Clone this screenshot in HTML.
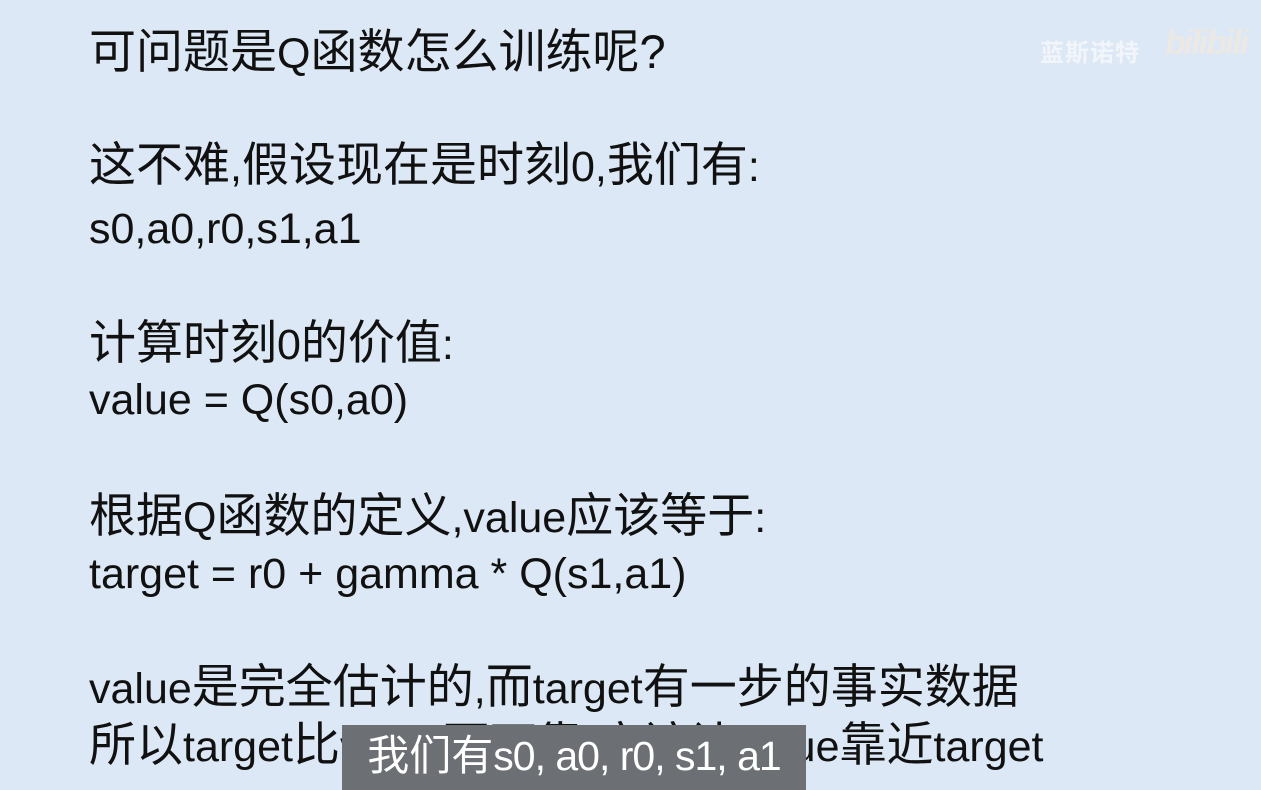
<!DOCTYPE html>
<html><head><meta charset="utf-8"><style>
body{margin:0;width:1261px;height:790px;overflow:hidden;background:#dce8f5;position:relative;font-family:"Liberation Sans","Noto Sans CJK SC",sans-serif;color:#111}
.l{position:absolute;left:89px;font-size:47px;line-height:58px;white-space:nowrap}
.l b{font-weight:normal;font-size:43px}
.wm{position:absolute;left:1040px;top:33px;font-size:24px;color:#f2f5f9;font-weight:bold;letter-spacing:1px}
.bl{position:absolute;left:1165px;top:24px;font-size:34px;color:#ece9e4;font-weight:bold;font-style:italic;letter-spacing:-2px}
.sub{position:absolute;left:342px;top:725px;width:464px;height:65px;background:#6c6f73;color:#fff;font-size:42px;line-height:62px;text-align:center}
.sub b{font-size:41px;font-weight:normal;letter-spacing:-1px}
</style></head><body>
<div class="wm">蓝斯诺特</div><div class="bl">bilibili</div>
<div class="l" style="top:23px">可问题是<b>Q</b>函数怎么训练呢?</div>
<div class="l" style="top:136px">这不难<b>,</b>假设现在是时刻<b>0,</b>我们有<b>:</b></div>
<div class="l" style="top:198px"><b>s0,a0,r0,s1,a1</b></div>
<div class="l" style="top:314px">计算时刻<b>0</b>的价值<b>:</b></div>
<div class="l" style="top:369px"><b>value = Q(s0,a0)</b></div>
<div class="l" style="top:487px">根据<b>Q</b>函数的定义<b>,value</b>应该等于<b>:</b></div>
<div class="l" style="top:543px"><b>target = r0 + gamma * Q(s1,a1)</b></div>
<div class="l" style="top:658px"><b>value</b>是完全估计的<b>,</b>而<b>target</b>有一步的事实数据</div>
<div class="l" style="top:716px">所以<b>target</b>比<b>value</b>更可靠<b>,</b>应该让<b>value</b>靠近<b>target</b></div>
<div class="sub">我们有<b>s0, a0, r0, s1, a1</b></div>
</body></html>
